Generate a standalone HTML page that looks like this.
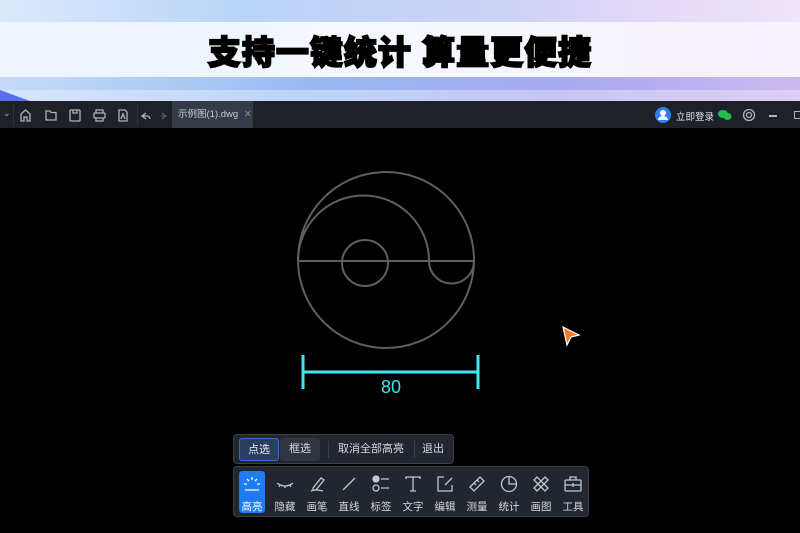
<!DOCTYPE html>
<html><head><meta charset="utf-8"><style>
*{margin:0;padding:0;box-sizing:border-box}
body{width:800px;height:533px;overflow:hidden;background:#000;font-family:"Liberation Sans","Noto Sans CJK SC",sans-serif;position:relative}
#banner{position:absolute;left:0;top:0;width:800px;height:102px;background:linear-gradient(90deg,#dbe9fb 0%,#b9d4f8 30%,#c9d2f6 60%,#e2d7f7 80%,#efe6fb 100%)}
#band{position:absolute;left:0;top:22px;width:800px;height:55px;background:linear-gradient(90deg,rgba(255,255,255,.55),rgba(255,255,255,.85) 40%,rgba(255,255,255,.8) 70%,rgba(255,255,255,.5))}
#band2{position:absolute;left:0;top:77px;width:800px;height:13px;background:linear-gradient(90deg,#c5dcf8,#98b9f2 40%,#a7a9ee 70%,#cbb8f2)}
#band3{position:absolute;left:0;top:90px;width:800px;height:11px;background:linear-gradient(90deg,#d6e6fb,#bcd3f8 40%,#c7c5f3 70%,#dccff6)}
#title{position:absolute;left:0;width:800px;top:26px;text-align:center;font-size:33px;font-weight:900;color:#000;letter-spacing:1px;-webkit-text-stroke:1.8px #000;text-shadow:0 0 2px #fff,1px 1px 0 #fff,-1px -1px 0 #fff}
#bar{position:absolute;left:0;top:101px;width:800px;height:27px;background:#1e2128}
#tab{position:absolute;left:172px;top:101px;width:81px;height:27px;background:#353b47;color:#c8ccd3;font-size:9.5px;line-height:27px;padding-left:6px;white-space:nowrap;overflow:hidden}
.sep{position:absolute;top:104px;width:1px;height:22px;background:#2e323a}
#sel{position:absolute;left:233px;top:434px;width:221px;height:30px;background:#22262e;border:1px solid #3a3f49;border-radius:4px}
.sb{position:absolute;top:3px;height:23px;font-size:11px;color:#d5d8de;line-height:23px;text-align:center;border-radius:3px}
#tools{position:absolute;left:233px;top:466px;width:356px;height:51px;background:#22262e;border:1px solid #3a3f49;border-radius:4px}
.t{position:absolute;top:4px;width:26px;height:42px;text-align:center;font-size:10.5px;color:#d5d8de}
.t span{position:absolute;left:-4px;right:-4px;top:28px}
.t svg{position:absolute;left:3px;top:3px}
</style></head><body>
<div id="banner"></div><div id="band"></div><div id="band2"></div><div id="band3"></div>
<svg style="position:absolute;left:0;top:90px" width="40" height="12"><path d="M0 0L30 11H0z" fill="#5a6ff0"/></svg>
<div id="title">支持一键统计 算量更便捷</div>
<div id="bar"></div>
<div style="position:absolute;left:3px;top:108px;color:#aeb3bb;font-size:9px">⌄</div>
<div class="sep" style="left:13px"></div>
<svg style="position:absolute;left:0;top:102px" width="170" height="26" fill="none" stroke="#aeb3bb" stroke-width="1.3">
<path d="M21 19V12l4.5-4 4.5 4v7h-3v-4h-3v4z"/>
<path d="M46 9h4l1 1.5h5V18H46z"/>
<rect x="70" y="8" width="10" height="11" rx="1"/><path d="M73 8v3h4V8"/>
<rect x="94" y="11" width="11" height="5" rx="1"/><path d="M96 11V8h7v3M96 16v3h7v-3"/>
<path d="M119 8h6l2 2v9h-8z"/><path d="M121 17l2-5 2 5"/>
<path d="M146 11l-4 3 4 3M142 14h5a3 3 0 0 1 3 3"/>
<path d="M162 11l4 3-4 3M166 14h-5" stroke="#555a63"/>
</svg>
<div class="sep" style="left:137px"></div>
<div id="tab">示例图(1).dwg <span style="color:#8b909a;margin-left:3px">✕</span></div>
<svg style="position:absolute;left:655px;top:107px" width="16" height="16"><circle cx="8" cy="8" r="8" fill="#2f7fef"/><circle cx="8" cy="6" r="3" fill="#fff"/><path d="M3 13a5 4 0 0 1 10 0z" fill="#fff"/></svg>
<div style="position:absolute;left:676px;top:109px;font-size:9.5px;color:#dfe2e7">立即登录</div>
<svg style="position:absolute;left:718px;top:109px" width="14" height="12"><ellipse cx="5" cy="5" rx="5" ry="4" fill="#1fbf4a"/><ellipse cx="9.5" cy="7.5" rx="4" ry="3.5" fill="#1fbf4a"/></svg>
<svg style="position:absolute;left:742px;top:108px" width="14" height="14" fill="none" stroke="#aeb3bb" stroke-width="1.3"><circle cx="7" cy="7" r="5.5"/><circle cx="7" cy="7" r="2.5"/></svg>
<div style="position:absolute;left:769px;top:115px;width:8px;height:1.5px;background:#aeb3bb"></div>
<div style="position:absolute;left:794px;top:111px;width:8px;height:8px;border:1.3px solid #aeb3bb"></div>
<svg style="position:absolute;left:0;top:128px" width="800" height="405">
<g fill="none" stroke="#5f5f5f" stroke-width="2">
<circle cx="386" cy="132" r="88"/>
<line x1="298" y1="133" x2="474" y2="133"/>
<path d="M298 133A65.5 65.5 0 0 1 429 133"/>
<circle cx="365" cy="135" r="23"/>
<path d="M429 133A22.5 22.5 0 0 0 474 133"/>
</g>
<g stroke="#3fe6f0" stroke-width="3"><line x1="303" y1="244" x2="478" y2="244"/><line x1="303" y1="227" x2="303" y2="261"/><line x1="478" y1="227" x2="478" y2="261"/></g>
<text x="391" y="265" fill="#3fe6f0" font-size="18" text-anchor="middle" font-family="Liberation Sans">80</text>
<path d="M563 199l16 8-8 2-4 8z" fill="#f57d20" stroke="#fff" stroke-width="1.2"/>
</svg>
<div id="sel">
<div class="sb" style="left:5px;width:40px;background:#2a3f60;border:1px solid #2f6fd0;color:#e6e9ee">点选</div>
<div class="sb" style="left:46px;width:40px;background:#30353f">框选</div>
<div style="position:absolute;left:94px;top:6px;width:1px;height:17px;background:#3a3f49"></div>
<div class="sb" style="left:94px;width:86px">取消全部高亮</div>
<div style="position:absolute;left:180px;top:6px;width:1px;height:17px;background:#3a3f49"></div>
<div class="sb" style="left:182px;width:34px">退出</div>
</div>
<div id="tools">
<div class="t" style="left:5px;background:#1e7bf0;border-radius:3px;color:#fff"><svg width="20" height="20" fill="none" stroke="#fff" stroke-width="1.3"><path d="M3 16h14M10 3v3M5 5l2 2M15 5l-2 2M2 10h3M15 10h3"/></svg><span>高亮</span></div>
<div class="t" style="left:38px"><svg width="20" height="20" fill="none" stroke="#c3c7ce" stroke-width="1.3"><path d="M2 9q8 6 16 0M5 11l-1 2M10 12v2M15 11l1 2"/></svg><span>隐藏</span></div>
<div class="t" style="left:70px"><svg width="20" height="20" fill="none" stroke="#c3c7ce" stroke-width="1.3"><path d="M6 14l8-10 3 2-8 10H6zM4 17q4-2 12 0"/></svg><span>画笔</span></div>
<div class="t" style="left:102px"><svg width="20" height="20" fill="none" stroke="#c3c7ce" stroke-width="1.3"><path d="M4 16L16 4"/></svg><span>直线</span></div>
<div class="t" style="left:134px"><svg width="20" height="20" fill="none" stroke="#c3c7ce" stroke-width="1.3"><circle cx="5" cy="5" r="3" fill="#c3c7ce"/><circle cx="5" cy="14" r="3"/><path d="M10 5h8M10 14h8"/></svg><span>标签</span></div>
<div class="t" style="left:166px"><svg width="20" height="20" fill="none" stroke="#c3c7ce" stroke-width="1.3"><path d="M3 5V3h14v2M10 3v14M7 17h6"/></svg><span>文字</span></div>
<div class="t" style="left:198px"><svg width="20" height="20" fill="none" stroke="#c3c7ce" stroke-width="1.3"><path d="M9 3H3v14h14v-6M10 11l7-7"/></svg><span>编辑</span></div>
<div class="t" style="left:230px"><svg width="20" height="20" fill="none" stroke="#c3c7ce" stroke-width="1.3"><path d="M3 13l10-10 4 4-10 10zM7 9l2 2M10 6l2 2"/></svg><span>测量</span></div>
<div class="t" style="left:262px"><svg width="20" height="20" fill="none" stroke="#c3c7ce" stroke-width="1.3"><circle cx="10" cy="10" r="7.5"/><path d="M10 2.5V10h7.5"/></svg><span>统计</span></div>
<div class="t" style="left:294px"><svg width="20" height="20" fill="none" stroke="#c3c7ce" stroke-width="1.3"><path d="M3 6l3-3 11 11-3 3zM14 3l3 3L6 17l-3-3z"/></svg><span>画图</span></div>
<div class="t" style="left:326px"><svg width="20" height="20" fill="none" stroke="#c3c7ce" stroke-width="1.3"><rect x="2" y="6" width="16" height="11" rx="1"/><path d="M7 6V3h6v3M2 11h16M10 9v4"/></svg><span>工具</span></div>
</div>
</body></html>
